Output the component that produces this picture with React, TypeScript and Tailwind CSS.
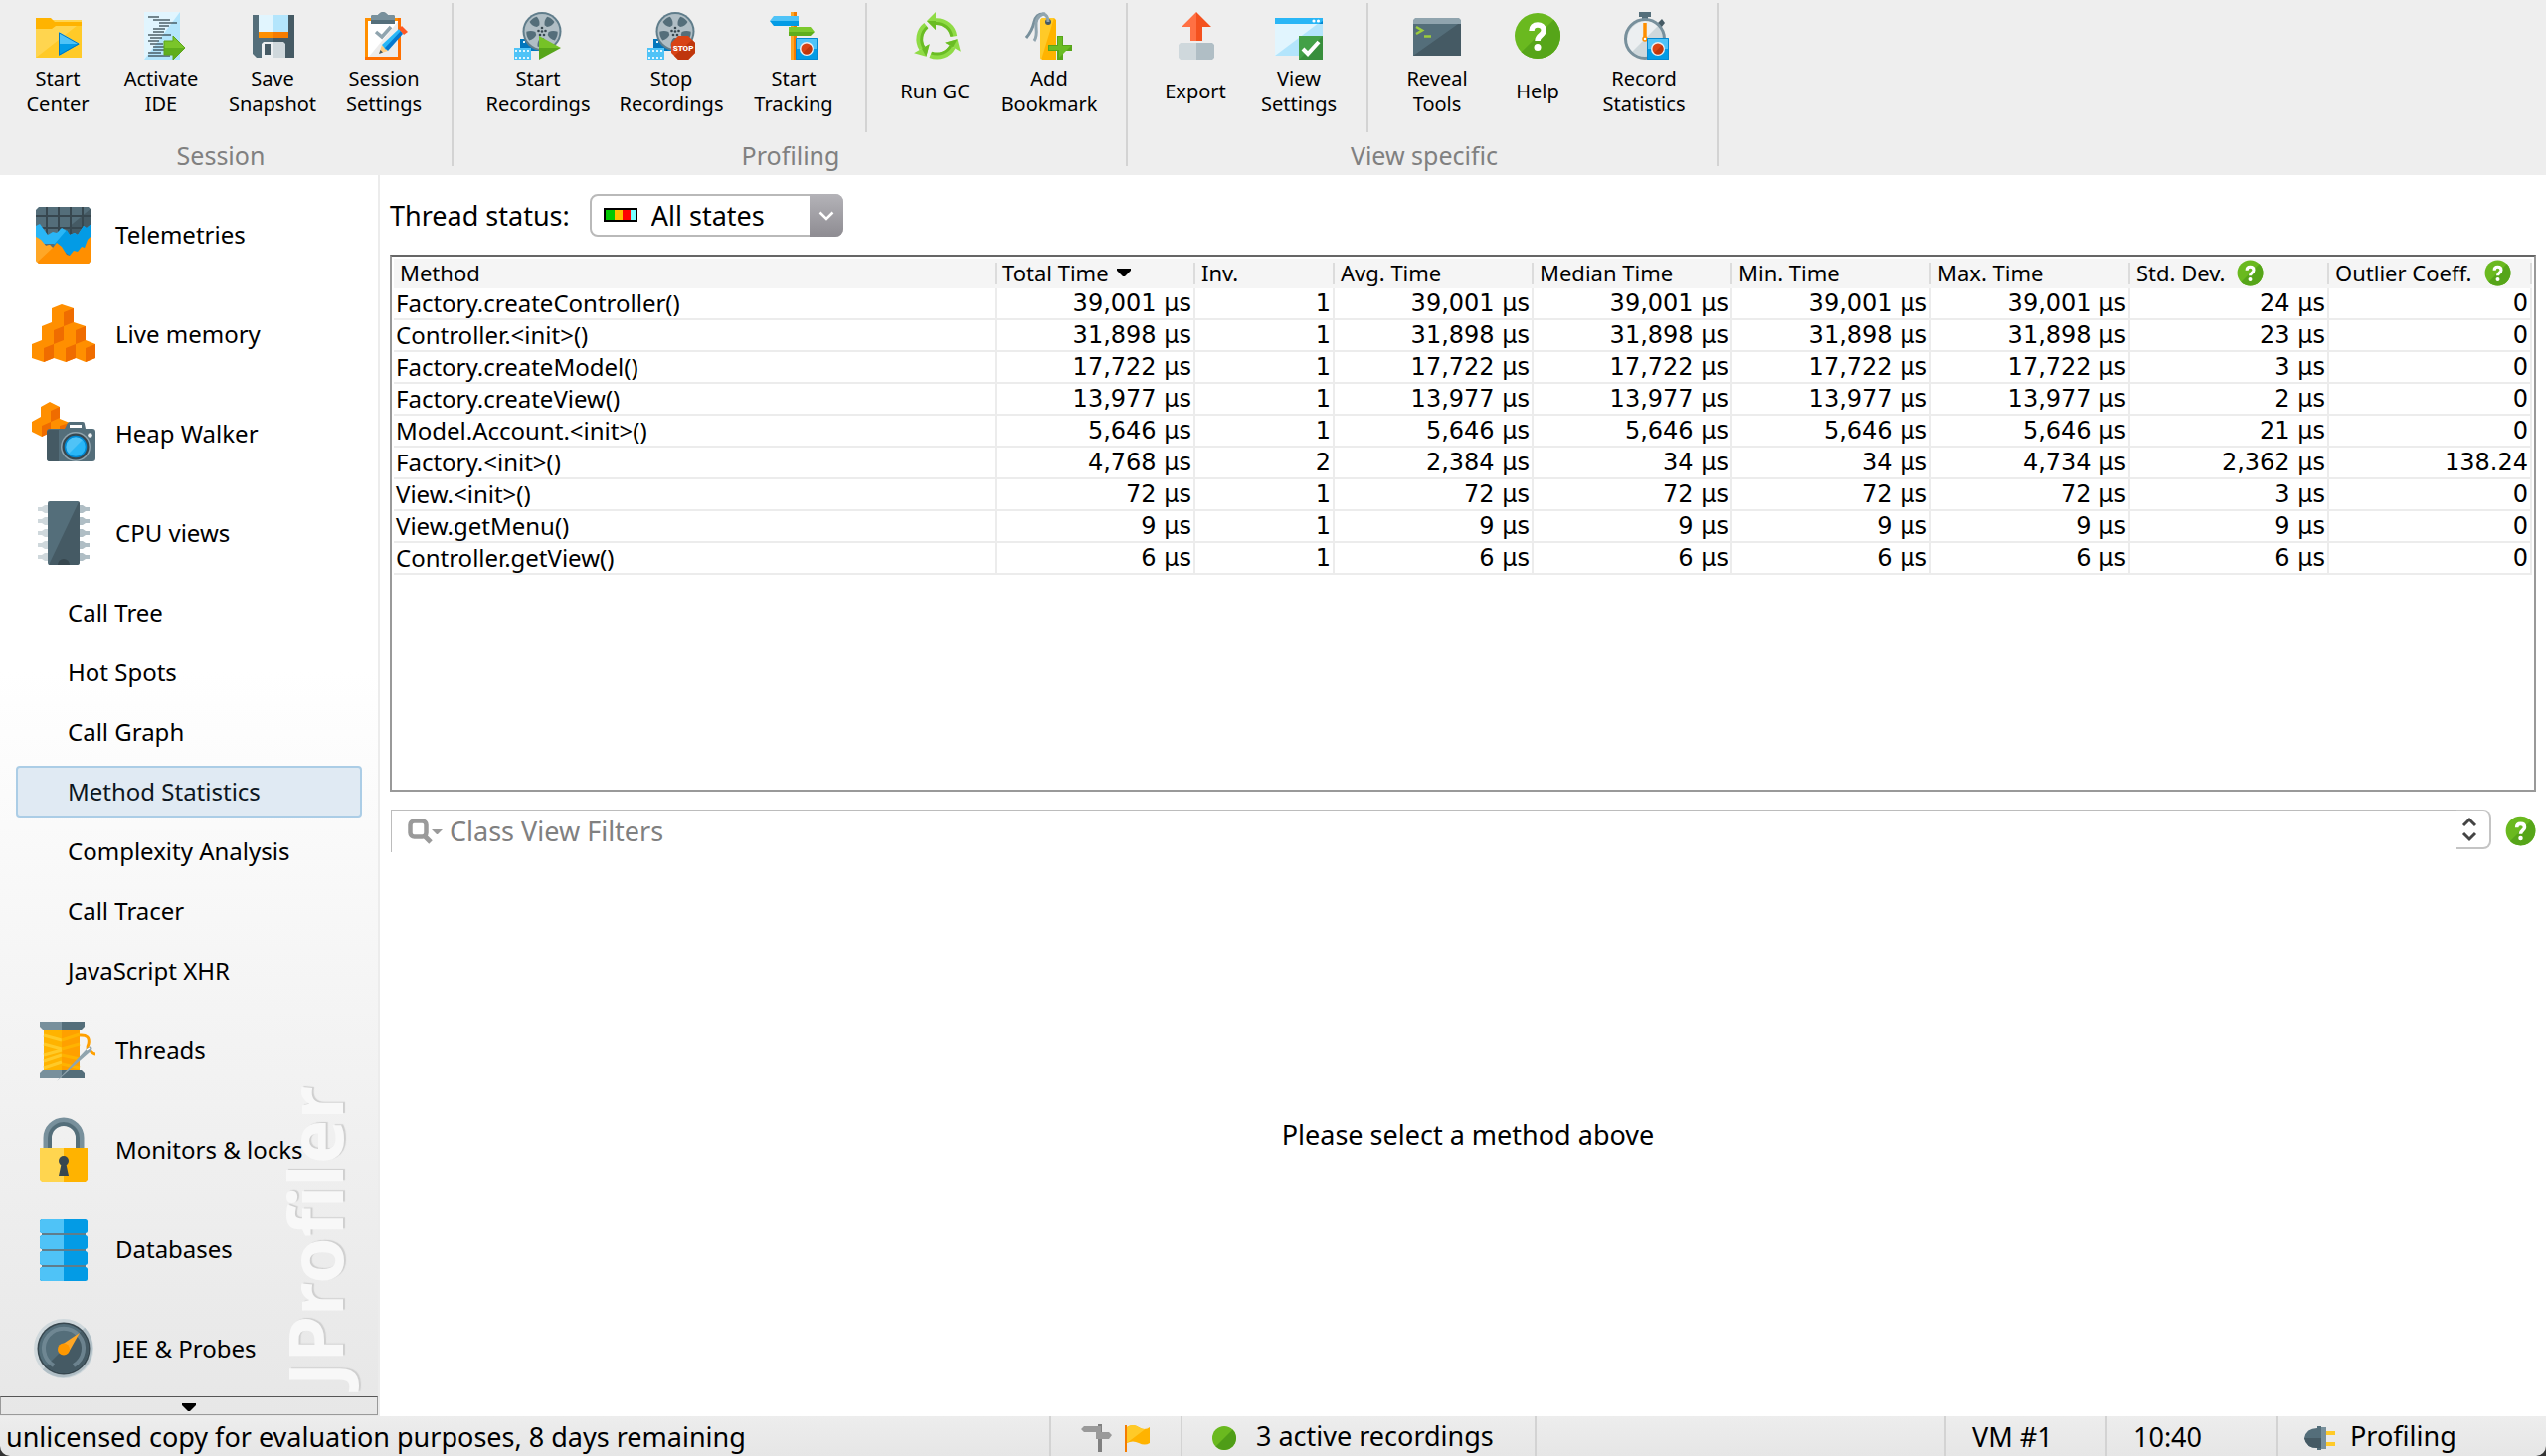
import type { ReactNode } from 'react';

/* ---------- Toolbar icons (48 x 48) ---------- */

function Icon48({ children }: { children: ReactNode }) {
  return (
    <svg viewBox="0 0 48 48" className="size-12 shrink-0 overflow-visible" aria-hidden="true">
      {children}
    </svg>
  );
}

const StartCenterIcon = () => (
  <Icon48>
    <path d="M2 8h46v38H2z" fill="#ffca28" />
    <path d="M2 8h46v2L2 46z" fill="#ffd54f" />
    <path d="M2 6h15l4 4h27v4H22l-4 3H2z" fill="#ffb300" />
    <path d="M25 20l21 12H25z" fill="#4fc3f7" />
    <path d="M25 32h21L25 44z" fill="#039be5" />
    <path d="M25.5 21v22L45 32z" fill="none" stroke="#0277bd" strokeWidth="1" />
  </Icon48>
);

const codeLines: [number, number, number][] = [
  [5, 11, 22], [8, 16, 33], [11, 22, 40], [14, 22, 32], [17, 16, 28], [20, 16, 27], [23, 11, 34],
  [26, 13, 25], [29, 11, 22], [32, 13, 26], [35, 16, 27], [38, 16, 27], [41, 11, 24], [44, 11, 33],
];

const ActivateIdeIcon = () => (
  <Icon48>
    <path d="M7 0h36v48H7z" fill="#b3e5fc" />
    <path d="M7 0h36L7 48z" fill="#e1f5fe" />
    {codeLines.map(([y, a, b]) => (
      <path key={y} d={`M${a} ${y}H${b}`} stroke="#37474f" strokeWidth="1.3" />
    ))}
    <path d="M27 29h9v-5l12 12-12 12v-5h-9z" fill="#7ac52a" />
    <path d="M27 36h21L36 48v-5h-9z" fill="#5fae1c" />
    <path d="M27 29h9v-5l12 12-12 12v-5h-9z" fill="none" stroke="#5da41b" strokeWidth="1" />
  </Icon48>
);

const SaveIcon = () => (
  <Icon48>
    <path d="M4 3h21v43H8l-4-4z" fill="#546e7a" />
    <path d="M25 3h21v43H25z" fill="#455a64" />
    <path d="M10 3h15v17H10z" fill="#e1f5fe" />
    <path d="M25 3h15v17H25z" fill="#b3e5fc" />
    <path d="M10 20h15v6H10z" fill="#ff8f00" />
    <path d="M25 20h15v6H25z" fill="#f57c00" />
    <path d="M15 30h10v16H13V32z" fill="#eceff1" />
    <path d="M25 30h10l2 2v14H25z" fill="#cfd8dc" />
    <path d="M16 32h6v11h-6z" fill="#455a64" />
  </Icon48>
);

const SessionSettingsIcon = () => (
  <Icon48>
    <path d="M6.5 7.500h33v39h-33z" fill="#fff" />
    <path d="M39.500 8v38H8z" fill="#ececec" />
    <path d="M39.500 7.500h-33v39" fill="none" stroke="#ff8f00" strokeWidth="3" />
    <path d="M39.500 6v40.500H5" fill="none" stroke="#ff6f00" strokeWidth="3" />
    <path d="M11 12V5q0-2 2-2h5q5-6 10 0h5q2 0 2 2v7z" fill="#546e7a" />
    <path d="M11 8V5q0-2 2-2h5q5-6 10 0h5q2 0 2 2v3z" fill="#78909c" />
    <path d="M16 20l6 5 9-10" fill="none" stroke="#90a4ae" strokeWidth="3.500" />
    <path d="M19 42l3-9 6 6z" fill="#ffcc80" />
    <path d="M19 42l1.500-4 2.500 2.500z" fill="#455a64" />
    <path d="M22 33l17-16 4 4-17 17z" fill="#29b6f6" />
    <path d="M25 36l16-17 2 3-15 17z" fill="#0277d0" />
    <path d="M39 17l3-3 6 6-4 3z" fill="#ff5722" />
  </Icon48>
);

function FilmReel() {
  return (
    <>
      <path d="M6 27h22v12H6z" fill="#0277bd" />
      <path d="M9 30h10" stroke="#e1f5fe" strokeWidth="2" strokeDasharray="2 2" />
      <circle cx="28" cy="19.500" r="19.500" fill="#607d8b" />
      <circle cx="28" cy="19.500" r="17.500" fill="#b0bec5" />
      <g fill="#546e7a">
        {[36, 108, 180, 252, 324].map((a) => (
          <path key={a} d="M23.500 4.500q4.500-1.800 9 0q.5 5-3 8.500h-3q-3.500-3.500-3-8.500z" transform={`rotate(${a} 28 19.5)`} />
        ))}
      </g>
      <circle cx="28" cy="19.500" r="5" fill="#b0bec5" />
      <g fill="#37474f">
        <circle cx="28" cy="19.500" r="1.300" />
        <circle cx="28" cy="16" r="1.300" />
        <circle cx="24.500" cy="19" r="1.300" />
        <circle cx="31.500" cy="19" r="1.300" />
        <circle cx="26" cy="23" r="1.300" />
        <circle cx="30" cy="23" r="1.300" />
      </g>
      <path d="M0 36h17v12H0z" fill="#4fc3f7" />
      <path d="M1 39h15M1 46h15" stroke="#e1f5fe" strokeWidth="2" strokeDasharray="2 2" />
    </>
  );
}

const StartRecordingsIcon = () => (
  <Icon48>
    <FilmReel />
    <path d="M25 24l22 12H25z" fill="#76c227" />
    <path d="M25 36h22L25 48z" fill="#57a51a" />
  </Icon48>
);

const StopRecordingsIcon = () => (
  <Icon48>
    <FilmReel />
    <path d="M31 24h10l7 7v10l-7 7H31l-7-7V31z" fill="#d84315" />
    <path d="M48 31v10l-7 7H31l-4-4 18-16z" fill="#bf360c" />
    <text x="36" y="38.500" textAnchor="middle" fontFamily="Roboto, sans-serif" fontWeight="900" fontSize="8" fill="#fff">STOP</text>
  </Icon48>
);

function RecordBadge() {
  return (
    <>
      <path d="M26 26h22v22H26z" fill="#4fc3f7" />
      <path d="M26 37h22v11H26z" fill="#039be5" />
      <path d="M26.500 26.500h21v21h-21z" fill="none" stroke="#0288d1" strokeWidth="1" />
      <circle cx="37" cy="37" r="7" fill="#eceff1" />
      <circle cx="37" cy="37" r="5.500" fill="#d84315" />
      <path d="M41 33.200A5.500 5.500 0 0 1 33.200 41z" fill="#bf360c" />
    </>
  );
}

const StartTrackingIcon = () => (
  <Icon48>
    <path d="M21 0h3v48h-3z" fill="#ffa726" />
    <path d="M24 0h3v48h-3z" fill="#f57c00" />
    <path d="M0 9l4-5h25v5z" fill="#4fc3f7" />
    <path d="M0 9h29v5H4z" fill="#039be5" />
    <path d="M19 15h22l4 5H19z" fill="#7cc92d" />
    <path d="M19 20h26l-4 4H19z" fill="#5fae1c" />
    <RecordBadge />
  </Icon48>
);

const RunGcIcon = () => (
  <Icon48>
    <g transform="translate(2 0)">
      {[0, 120, 240].map((a) => (
        <g key={a} transform={`rotate(${a} 24 27)`}>
          <path d="M23 9.500A17.500 17.500 0 0 1 41 24.500" fill="none" stroke="#8fdb45" strokeWidth="6.500" />
          <path d="M14 9L23 0v18z" fill="#8fdb45" />
          <path d="M23 11.500A15.500 15.500 0 0 1 38.800 24.500" fill="none" stroke="#6abc24" strokeWidth="3" />
          <path d="M14 9h9v9z" fill="#6abc24" />
        </g>
      ))}
    </g>
  </Icon48>
);

const BookmarkIcon = () => (
  <Icon48>
    <path d="M17 6h12l2 2v40H17l-2-2V8z" fill="#ffb300" />
    <path d="M17 6h12L16 48l-1-2V8z" fill="#ffca28" />
    <circle cx="23" cy="10" r="3" fill="#455a64" />
    <path d="M1 26Q7 19 9 10T20 2" fill="none" stroke="#78909c" strokeWidth="3" />
    <path d="M9 29Q12 25 11 15T18 2q5 1 5 8" fill="none" stroke="#90a4ae" strokeWidth="3" />
    <path d="M32 24h6v9h9v6h-9v9h-6v-9h-9v-6h9z" fill="#57a51a" />
    <path d="M33 25h4v9h9L34 46v-8H24v-4h9z" fill="#6abc24" />
  </Icon48>
);

const ExportIcon = () => (
  <Icon48>
    <path d="M25 0v29h-6V15h-9z" fill="#ff7043" />
    <path d="M25 0l15 15h-9v14h-6z" fill="#f4511e" />
    <path d="M9 31h16v17H9l-2-2V33z" fill="#cfd8dc" />
    <path d="M25 31h16l2 2v13l-2 2H25z" fill="#b0bec5" />
  </Icon48>
);

const ViewSettingsIcon = () => (
  <Icon48>
    <path d="M0 8h48v36H0z" fill="#b3e5fc" />
    <path d="M0 8h48L0 44z" fill="#e1f5fe" />
    <path d="M0 6h48v6H0z" fill="#29b6f6" />
    <path d="M44 12l4-3v3z" fill="#0288d1" />
    <circle cx="39" cy="9" r="1.600" fill="#fff" />
    <circle cx="43.500" cy="9" r="1.600" fill="#fff" />
    <path d="M24 24h24v24H24z" fill="#388e3c" />
    <path d="M24 24h24L24 48z" fill="#43a047" />
    <path d="M28 37l5 5 11-12" fill="none" stroke="#fff" strokeWidth="4" />
  </Icon48>
);

const RevealToolsIcon = () => (
  <Icon48>
    <path d="M0 10h48v34H0z" fill="#546e7a" />
    <path d="M48 10v34H0z" fill="#455a64" />
    <path d="M0 12V8l2-2h44l2 2v4z" fill="#90a4ae" />
    <path d="M3 15l6 3.500L3 22M11 24.500h7" fill="none" stroke="#9ccc3c" strokeWidth="2.500" />
  </Icon48>
);

function HelpGlyph({ className }: { className: string }) {
  return (
    <svg viewBox="0 0 48 48" className={className} aria-hidden="true">
      <circle cx="24" cy="24" r="23" fill="#6ab91f" />
      <path d="M40.300 7.700A23 23 0 0 1 7.700 40.300z" fill="#56a519" />
      <path d="M18 19c0-4 2.500-6 6-6s6.200 2 6.200 5.500c0 5-6.200 5-6.200 10.500" fill="none" stroke="#fff" strokeWidth="5.500" />
      <circle cx="24" cy="35.500" r="3.500" fill="#fff" />
    </svg>
  );
}

const HelpIcon = () => <HelpGlyph className="size-12 shrink-0" />;

const RecordStatisticsIcon = () => (
  <Icon48>
    <path d="M19 0h12v5h-3v4h-6V5h-3z" fill="#546e7a" />
    <path d="M37 12l5-5 3 4-4 5z" fill="#455a64" />
    <circle cx="25" cy="27" r="20" fill="#cfd8dc" />
    <path d="M39 13A20 20 0 0 0 11 41z" fill="#eceff1" />
    <circle cx="25" cy="27" r="19.500" fill="none" stroke="#78909c" strokeWidth="3" />
    <path d="M25 11v14" stroke="#ff8f00" strokeWidth="3.500" />
    <circle cx="25" cy="27" r="2" fill="#fff" stroke="#ff8f00" strokeWidth="1.500" />
    <g transform="translate(1 0)">
      <RecordBadge />
    </g>
  </Icon48>
);

/* ---------- Sidebar icons (64 x 64) ---------- */

function Icon64({ children }: { children: ReactNode }) {
  return (
    <svg viewBox="0 0 64 64" className="size-16 shrink-0 overflow-visible" aria-hidden="true">
      {children}
    </svg>
  );
}

const TelemetriesIcon = () => (
  <Icon64>
    <path d="M7 4h50l3 3v50l-3 4H7l-3-4V7z" fill="#546e7a" />
    <path d="M60 5v40H30V30z" fill="#455a64" />
    <path d="M4 13h56M4 25h56M15 4v28M27 4v28M39 4v28M51 4v28" stroke="#37474f" strokeWidth="2" />
    <path d="M4 23l4-2 8 11 5-3 4 1 5-5 5 3 3 4 5-2 3 2 6-9 3 2 5-4v20H4z" fill="#29b6f6" />
    <path d="M35 27l3 5 5-2 3 2 6-9 3 2 5-4v20L40 54 22 42z" fill="#039be5" />
    <path d="M4 34l5 3 5 6 4-1 3 3 4-5 5 4 5 8 3 1 4-5 4 1 4-5 3 1 3-8 4-4v25l-3 3H7l-3-3z" fill="#ff8f00" />
    <path d="M4 34l5 3 5 6 4-1 3 3-16 15-1-3z" fill="#ffa726" />
  </Icon64>
);

const LiveMemoryIcon = () => (
  <Icon64>
    <path d="M20 6L30 2l12 4v14l12 4v14l10 4v14l-10 4-10-4-10 4-12-4-10 4-12-4V42l10-4V24l10-4z" fill="#ff8f00" />
    <g fill="#ef6c00">
      <path d="M32 10l10-4v14l-10 4zM22 28l10-4v14l-10 4zM44 28l10-4v14l-10 4z" />
      <path d="M12 46l10-4v14l-10 4zM34 46l10-4v14l-10 4zM54 46l10-4v14l-10 4z" />
    </g>
  </Icon64>
);

const HeapWalkerIcon = () => (
  <Icon64>
    <path d="M9 5l9-5 10 5v12l10 4v10l-10 4-9-6-9 6-10-5V20l9-5z" fill="#ff8f00" />
    <path d="M19 9l9-4v11l-9 4zM10 24l9-4v11l-9 4zM28 24l10-3v8H28z" fill="#ef6c00" />
    <path d="M18 27h15l3-6q1-1 2-1h13q2 0 2 2l1 5h7q3 0 3 3v27q0 3-3 3H18q-3 0-3-3V30q0-3 3-3z" fill="#546e7a" />
    <path d="M18 28h9v32h-9q-3 0-3-3V31q0-3 3-3z" fill="#455a64" />
    <path d="M38 23h12v3H38z" fill="#fff" />
    <circle cx="58.500" cy="33.500" r="2.300" fill="#eceff1" />
    <circle cx="44" cy="45" r="15" fill="#90a4ae" />
    <circle cx="44" cy="45" r="13.500" fill="#37474f" />
    <circle cx="44" cy="45" r="10.500" fill="#29b6f6" />
    <path d="M51.400 37.600A10.500 10.500 0 0 0 36.600 52.400z" fill="#4fc3f7" />
    <circle cx="44" cy="45" r="10.500" fill="none" stroke="#0288d1" strokeWidth="1.500" />
  </Icon64>
);

const CpuIcon = () => (
  <Icon64>
    {[8, 20, 32, 44, 56].map((y) => (
      <g key={y}>
        <path d={`M6 ${y - 2}h4l3-2h3v8h-3l-3-2H6z`} fill="#cfd8dc" />
        <path d={`M58 ${y - 2}h-4l-3-2h-3v8h3l3-2h4z`} fill="#b0bec5" />
      </g>
    ))}
    <rect x="16" y="0" width="32" height="64" rx="2" fill="#546e7a" />
    <path d="M47 1l1 1v60l-2 2H17z" fill="#455a64" />
    <path d="M26 64a6 6 0 0 1 12 0z" fill="#37474f" />
  </Icon64>
);

const ThreadsIcon = () => (
  <Icon64>
    <path d="M12 12h20v40H12z" fill="#ffb300" />
    <path d="M30 12h18v40H30z" fill="#ffa000" />
    <path d="M12 17l18 5M12 26l18 5M12 43l18-6M12 50l18-6M12 37l18-5" stroke="#ffca28" strokeWidth="3" />
    <path d="M30 22l18-6M30 31l18-5M30 37l18 4M30 46l18 4" stroke="#ffb300" strokeWidth="3" />
    <path d="M8 4h22v8H11l-3-3z" fill="#78909c" />
    <path d="M30 4h23v5l-3 3H30z" fill="#546e7a" />
    <path d="M11 52h19v8H8v-5z" fill="#78909c" />
    <path d="M30 52h20l3 3v5H30z" fill="#546e7a" />
    <path d="M48 17q11-1 9 9-3 6 2 7 3 3 5 3" fill="none" stroke="#ffa000" strokeWidth="3" />
    <path d="M25 63l29-31q4-5 6-3t-3 6z" fill="#90a4ae" />
    <path d="M55 32l3-2" stroke="#fff" strokeWidth="1.500" />
  </Icon64>
);

const LockIcon = () => (
  <Icon64>
    <path d="M14 31V20a18 18 0 0 1 36 0v11" fill="none" stroke="#78909c" strokeWidth="5" />
    <path d="M18 31V20a14 14 0 0 1 28 0v11" fill="none" stroke="#546e7a" strokeWidth="4" />
    <path d="M8 30h24v34H10l-2-2z" fill="#ffd54f" />
    <path d="M32 30h24v32l-2 2H32z" fill="#ffb300" />
    <circle cx="32" cy="43" r="5" fill="#37474f" />
    <path d="M30 44h4l3 14H27z" fill="#37474f" />
  </Icon64>
);

const DatabasesIcon = () => (
  <Icon64>
    <path d="M10 6h44v52H10z" fill="#607d8b" />
    {[2, 18, 34, 50].map((y) => (
      <g key={y}>
        <rect x="8" y={y} width="48" height="14" rx="2.500" fill="#039be5" />
        <path d={`M10 ${y}h22v14H10l-2-2V${y + 2}z`} fill="#4fc3f7" />
      </g>
    ))}
  </Icon64>
);

const GaugeIcon = () => (
  <Icon64>
    <circle cx="32" cy="32" r="30" fill="#cfd8dc" />
    <path d="M53.200 10.800A30 30 0 0 1 10.800 53.200z" fill="#b0bec5" />
    <circle cx="32" cy="32" r="26.500" fill="#37474f" />
    <circle cx="32" cy="32" r="25" fill="#546e7a" />
    <path d="M49.700 14.300A25 25 0 0 1 14.300 49.700z" fill="#455a64" />
    <path d="M22 49a20 20 0 1 1 20 0" fill="none" stroke="#78909c" strokeWidth="4" opacity=".75" />
    <path d="M48 16L37.500 34.500 27 30z" fill="#ffa726" />
    <circle cx="32" cy="32.500" r="6" fill="#ff9800" />
  </Icon64>
);

/* ---------- Toolbar ---------- */

type Tool = { label: string; lines: string[]; width: string; icon: () => ReactNode };

const sessionTools: Tool[] = [
  { label: 'Start Center', lines: ['Start', 'Center'], width: 'w-[104px]', icon: StartCenterIcon },
  { label: 'Activate IDE', lines: ['Activate', 'IDE'], width: 'w-[104px]', icon: ActivateIdeIcon },
  { label: 'Save Snapshot', lines: ['Save', 'Snapshot'], width: 'w-[120px]', icon: SaveIcon },
  { label: 'Session Settings', lines: ['Session', 'Settings'], width: 'w-[104px]', icon: SessionSettingsIcon },
];

const recordingTools: Tool[] = [
  { label: 'Start Recordings', lines: ['Start', 'Recordings'], width: 'w-[134px]', icon: StartRecordingsIcon },
  { label: 'Stop Recordings', lines: ['Stop', 'Recordings'], width: 'w-[134px]', icon: StopRecordingsIcon },
  { label: 'Start Tracking', lines: ['Start', 'Tracking'], width: 'w-[112px]', icon: StartTrackingIcon },
];

const vmTools: Tool[] = [
  { label: 'Run GC', lines: ['Run GC'], width: 'w-[108px]', icon: RunGcIcon },
  { label: 'Add Bookmark', lines: ['Add', 'Bookmark'], width: 'w-[122px]', icon: BookmarkIcon },
];

const viewTools: Tool[] = [
  { label: 'Export', lines: ['Export'], width: 'w-[104px]', icon: ExportIcon },
  { label: 'View Settings', lines: ['View', 'Settings'], width: 'w-[104px]', icon: ViewSettingsIcon },
];

const helpTools: Tool[] = [
  { label: 'Reveal Tools', lines: ['Reveal', 'Tools'], width: 'w-[110px]', icon: RevealToolsIcon },
  { label: 'Help', lines: ['Help'], width: 'w-[92px]', icon: HelpIcon },
  { label: 'Record Statistics', lines: ['Record', 'Statistics'], width: 'w-[122px]', icon: RecordStatisticsIcon },
];

function ToolButtons({ tools }: { tools: Tool[] }) {
  return (
    <div className="flex">
      {tools.map(({ label, lines, width, icon: Icon }) => (
        <button key={label} type="button" className={`flex flex-col items-center pt-[9px] ${width}`}>
          <Icon />
          <span className="flex h-16 flex-col justify-center text-[20px] leading-[26px] whitespace-nowrap">
            {lines.map((line) => (
              <span key={line}>{line}</span>
            ))}
          </span>
        </button>
      ))}
    </div>
  );
}

function ToolGroup({ title, sets, className }: { title: string; sets: Tool[][]; className: string }) {
  return (
    <section className={`flex flex-col border-r-2 border-[#d3d3d3] ${className}`}>
      <div className="flex h-[130px] shrink-0">
        {sets.map((tools, i) => (
          <div key={tools[0].label} className={i > 0 ? 'ml-4 border-l-2 border-[#d3d3d3] pl-[14px]' : ''}>
            <ToolButtons tools={tools} />
          </div>
        ))}
      </div>
      <h2 className="pt-1.5 text-center text-[25px] leading-[34px] text-[#808080]">{title}</h2>
    </section>
  );
}

/* ---------- Sidebar ---------- */

type View = { label: string; icon: () => ReactNode };

const topViews: View[] = [
  { label: 'Telemetries', icon: TelemetriesIcon },
  { label: 'Live memory', icon: LiveMemoryIcon },
  { label: 'Heap Walker', icon: HeapWalkerIcon },
  { label: 'CPU views', icon: CpuIcon },
];

const cpuViews = [
  'Call Tree',
  'Hot Spots',
  'Call Graph',
  'Method Statistics',
  'Complexity Analysis',
  'Call Tracer',
  'JavaScript XHR',
];

const bottomViews: View[] = [
  { label: 'Threads', icon: ThreadsIcon },
  { label: 'Monitors & locks', icon: LockIcon },
  { label: 'Databases', icon: DatabasesIcon },
  { label: 'JEE & Probes', icon: GaugeIcon },
];

function ViewButton({ label, icon: Icon }: View) {
  return (
    <button type="button" className="flex h-[100px] w-full items-center gap-5 pl-8 text-left text-2xl">
      <Icon />
      <span>{label}</span>
    </button>
  );
}

function Sidebar() {
  return (
    <aside className="relative flex w-[382px] shrink-0 flex-col border-r-2 border-[#ececec] bg-linear-to-b from-white from-40% to-[#e7e7e7]">
      <div className="absolute right-4 bottom-[30px] rotate-180 text-[75px] leading-[96px] font-bold text-[#f8f8f8] [text-shadow:1px_2px_1px_#cfcfcf] [writing-mode:vertical-rl]">
        JProfiler
      </div>
      <nav className="relative min-h-0 flex-1 overflow-hidden pt-2.5">
        {topViews.map((v) => (
          <ViewButton key={v.label} {...v} />
        ))}
        {cpuViews.map((label) => (
          <div key={label} className="flex h-[60px] items-center pr-4 pl-4">
            <button
              type="button"
              className={`h-[52px] w-full rounded-sm border-2 pl-[50px] text-left text-2xl ${
                label === 'Method Statistics' ? 'border-[#abcde6] bg-[#e0eaf3] text-[#0c1620]' : 'border-transparent'
              }`}
            >
              {label}
            </button>
          </div>
        ))}
        {bottomViews.map((v) => (
          <ViewButton key={v.label} {...v} />
        ))}
      </nav>
      <button
        type="button"
        aria-label="Scroll down"
        className="relative mb-px flex h-[19px] w-full items-end justify-center border border-[#999] border-t-[#555] pb-[3px]"
      >
        <svg viewBox="0 0 14 8" className="h-2 w-3.5" aria-hidden="true">
          <path d="M0 0h14v2L8 8H6L0 2z" fill="#000" />
        </svg>
      </button>
    </aside>
  );
}

/* ---------- Statistics table ---------- */

const columns = [
  { label: 'Method', width: '' },
  { label: 'Total Time', width: 'w-[200px]', sorted: true },
  { label: 'Inv.', width: 'w-[140px]' },
  { label: 'Avg. Time', width: 'w-[200px]' },
  { label: 'Median Time', width: 'w-[200px]' },
  { label: 'Min. Time', width: 'w-[200px]' },
  { label: 'Max. Time', width: 'w-[200px]' },
  { label: 'Std. Dev.', width: 'w-[200px]', help: true },
  { label: 'Outlier Coeff.', width: 'w-[204px]', help: true },
];

const rows = [
  ['Factory.createController()', '39,001 µs', '1', '39,001 µs', '39,001 µs', '39,001 µs', '39,001 µs', '24 µs', '0'],
  ['Controller.<init>()', '31,898 µs', '1', '31,898 µs', '31,898 µs', '31,898 µs', '31,898 µs', '23 µs', '0'],
  ['Factory.createModel()', '17,722 µs', '1', '17,722 µs', '17,722 µs', '17,722 µs', '17,722 µs', '3 µs', '0'],
  ['Factory.createView()', '13,977 µs', '1', '13,977 µs', '13,977 µs', '13,977 µs', '13,977 µs', '2 µs', '0'],
  ['Model.Account.<init>()', '5,646 µs', '1', '5,646 µs', '5,646 µs', '5,646 µs', '5,646 µs', '21 µs', '0'],
  ['Factory.<init>()', '4,768 µs', '2', '2,384 µs', '34 µs', '34 µs', '4,734 µs', '2,362 µs', '138.24'],
  ['View.<init>()', '72 µs', '1', '72 µs', '72 µs', '72 µs', '72 µs', '3 µs', '0'],
  ['View.getMenu()', '9 µs', '1', '9 µs', '9 µs', '9 µs', '9 µs', '9 µs', '0'],
  ['Controller.getView()', '6 µs', '1', '6 µs', '6 µs', '6 µs', '6 µs', '6 µs', '0'],
];

function StatisticsTable() {
  return (
    <div className="h-[540px] border-2 border-[#999] border-t-[#666] p-0.5">
      <table className="w-full table-fixed border-separate border-spacing-0">
        <thead>
          <tr>
            {columns.map((c) => (
              <th key={c.label} scope="col" className={`h-[30px] bg-[#f5f5f5] p-0 text-left text-[22px] font-normal ${c.width}`}>
                <div className="flex h-[22px] items-center gap-2 border-r-2 border-[#dcdcdc] pb-0.5 pl-[6px] whitespace-nowrap">
                  <span>{c.label}</span>
                  {c.sorted && (
                    <svg viewBox="0 0 14 8" className="h-2 w-3.5" aria-hidden="true">
                      <path d="M0 0h14v2L8 8H6L0 2z" fill="#000" />
                    </svg>
                  )}
                  {c.help && <HelpGlyph className="ml-1 size-[27px] shrink-0" />}
                </div>
              </th>
            ))}
          </tr>
        </thead>
        <tbody>
          {rows.map((row) => (
            <tr key={row[0]}>
              {row.map((cell, i) => (
                <td
                  key={columns[i].label}
                  className={`h-8 border-r-2 border-b-2 border-[#ececec] p-0 text-2xl leading-[30px] whitespace-nowrap ${
                    i === 0 ? 'pl-[2px]' : "pr-[2px] text-right font-['DejaVu_Sans',sans-serif]"
                  }`}
                >
                  {cell}
                </td>
              ))}
            </tr>
          ))}
        </tbody>
      </table>
    </div>
  );
}

/* ---------- Status bar ---------- */

function StatusBar() {
  return (
    <footer className="shrink-0 bg-[#333]">
      <div className="flex h-10 items-stretch rounded-b-[10px] bg-linear-to-b from-[#ededed] to-[#e6e6e6] text-[27px] leading-[42px] whitespace-nowrap">
        <div className="flex-1 pl-[6px]">unlicensed copy for evaluation purposes, 8 days remaining</div>
        <div className="flex w-[132px] items-center gap-3 border-l-2 border-[#d3d3d3] pt-1 pl-[30px]">
          <svg viewBox="0 0 32 28" className="h-7 w-8" aria-hidden="true">
            <path d="M17 0h4v28h-4z" fill="#808080" />
            <path d="M0 5l3-3h17v6H3zM15 8h13l3 3-3 4H15z" fill="#9a9a9a" />
          </svg>
          <svg viewBox="0 0 26 28" className="h-7 w-[26px]" aria-hidden="true">
            <path d="M1 1v27" stroke="#f57c00" strokeWidth="2" />
            <path d="M2 3q6-4 12 0t11 0v16q-5 3-11 0t-12 0z" fill="#ffb300" />
            <path d="M2 3q6-4 12 0t9 0L2 19z" fill="#ffca28" />
          </svg>
        </div>
        <div className="flex w-[356px] items-center gap-5 border-l-2 border-[#d3d3d3] pl-[30px]">
          <svg viewBox="0 0 24 24" className="mt-1 size-6" aria-hidden="true">
            <circle cx="12" cy="12" r="12" fill="#6ab91f" />
            <path d="M20.500 3.500A12 12 0 0 1 3.500 20.500z" fill="#4f9d17" />
          </svg>
          3 active recordings
        </div>
        <div className="w-[412px] border-l-2 border-[#d3d3d3]" />
        <div className="w-[162px] border-l-2 border-[#d3d3d3] pl-[26px]">VM #1</div>
        <div className="w-[172px] border-l-2 border-[#d3d3d3] pl-[26px]">10:40</div>
        <div className="flex w-[271px] items-center gap-3.5 border-l-2 border-[#d3d3d3] pl-[26px]">
          <svg viewBox="0 0 32 24" className="mt-1 h-6 w-8" aria-hidden="true">
            <path d="M21 5h10v4H21zM21 16h10v4H21z" fill="#ffca28" />
            <path d="M0 12Q2 2 13 2V0h4v24h-4v-2Q2 22 0 12z" fill="#546e7a" />
            <path d="M17 1h5v22h-5z" fill="#78909c" />
            <path d="M0 12h17v10h-4Q2 22 0 12z" fill="#455a64" />
          </svg>
          Profiling
        </div>
      </div>
    </footer>
  );
}

export default function App() {
  return (
    <div className="flex h-screen flex-col overflow-hidden bg-white font-['Noto_Sans',sans-serif] text-black">
      <header className="flex h-44 shrink-0 bg-[#eeeeee] pt-[3px] pb-[9px]">
        <ToolGroup title="Session" sets={[sessionTools]} className="pr-4 pl-[6px]" />
        <ToolGroup title="Profiling" sets={[recordingTools, vmTools]} className="pr-4 pl-[18px]" />
        <ToolGroup title="View specific" sets={[viewTools, helpTools]} className="pr-[12px] pl-4" />
      </header>

      <div className="flex min-h-0 flex-1">
        <Sidebar />

        <main className="flex min-w-0 flex-1 flex-col pt-[19px] pr-2.5 pl-2.5">
          <div className="mb-[18px] flex items-center gap-5 text-[27px]">
            <label htmlFor="thread-status" className="h-[43px] leading-[44px]">Thread status:</label>
            <div className="relative h-[43px] w-[255px]">
              <select
                id="thread-status"
                className="size-full appearance-none rounded-lg border-2 border-[#b9b9b9] bg-white pr-10 pl-[60px] text-[27px] leading-8"
              >
                <option>All states</option>
              </select>
              <svg viewBox="0 0 34 14" className="pointer-events-none absolute top-3.5 left-3.5 h-3.5 w-[34px]" aria-hidden="true">
                <path d="M0 0h34v14H0z" fill="#000" />
                <path d="M2 2h9v10H2z" fill="#00c800" />
                <path d="M11 2h8v10h-8z" fill="#ffc000" />
                <path d="M19 2h8v10h-8z" fill="#f00" />
                <path d="M27 2h5v10h-5z" fill="#7ff" />
              </svg>
              <span className="pointer-events-none absolute top-0 right-0 flex h-full w-[34px] items-center justify-center rounded-r-lg bg-linear-to-b from-[#b4b3b8] to-[#8e8c92]">
                <svg viewBox="0 0 16 10" className="h-2.5 w-4" aria-hidden="true">
                  <path d="M1.500 1.500L8 8l6.500-6.500" fill="none" stroke="#fff" strokeWidth="2.500" />
                </svg>
              </span>
            </div>
          </div>

          <StatisticsTable />

          <div className="mt-[18px] flex items-start gap-3.5">
            <div className="flex h-11 min-w-0 flex-1 items-start">
              <div className="ml-px flex h-[43px] min-w-0 flex-1 items-center border-t border-l border-[#bcbcbc] pl-4">
                <svg viewBox="0 0 36 26" className="h-[26px] w-9 shrink-0" aria-hidden="true">
                  <rect x="2.500" y="2.500" width="16" height="16" rx="4" fill="none" stroke="#9a9a9a" strokeWidth="4.500" />
                  <path d="M16 17l7 7" stroke="#9a9a9a" strokeWidth="5" />
                  <path d="M24 11h11l-5 5h-1z" fill="#9a9a9a" />
                </svg>
                <input
                  type="text"
                  aria-label="Class View Filters"
                  placeholder="Class View Filters"
                  className="ml-1.5 h-10 min-w-0 flex-1 bg-transparent text-[27px] outline-none placeholder:text-[#808080]"
                />
              </div>
              <button
                type="button"
                aria-label="Filter history"
                className="flex h-10 w-[35px] items-center justify-center rounded-r-lg border-t border-r-2 border-b-2 border-[#c4c4c4] pr-2"
              >
                <svg viewBox="0 0 16 26" className="h-[26px] w-4" aria-hidden="true">
                  <path d="M2 9l6-6 6 6M2 17l6 6 6-6" fill="none" stroke="#444" strokeWidth="3" />
                </svg>
              </button>
            </div>
            <button type="button" aria-label="Help" className="mt-1.5">
              <HelpGlyph className="size-[31px]" />
            </button>
          </div>

          <div className="-mr-2.5 flex flex-1 items-center justify-center text-[27px]">
            <p>Please select a method above</p>
          </div>
        </main>
      </div>

      <StatusBar />
    </div>
  );
}
